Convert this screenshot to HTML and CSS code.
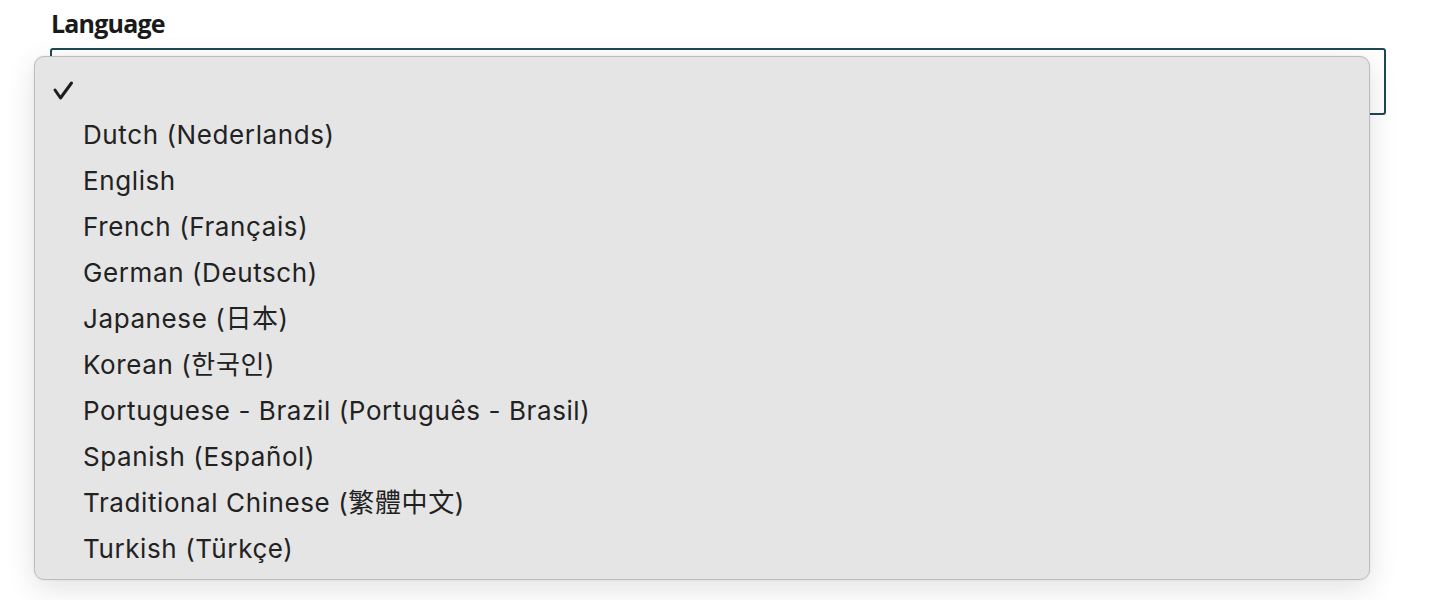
FILE: index.html
```html
<!DOCTYPE html>
<html lang="en">
<head>
    <meta charset="UTF-8">
    <title>Language</title>
    <link rel="stylesheet" href="styles.css">
</head>
<body>

<div class="field">
    <label class="field-label">Language</label>
    <div class="select-box"></div>

    <!-- open dropdown menu -->
    <ul class="menu">
        <li class="menu-item selected">
            <svg class="check" width="22" height="22" viewBox="0 0 22 22"><polyline points="3,10 8.5,18 19.5,3" fill="none" stroke="#1d1d1d" stroke-width="3" stroke-linecap="round" stroke-linejoin="round"/></svg>
        </li>
        <li class="menu-item">Dutch (Nederlands)</li>
        <li class="menu-item">English</li>
        <li class="menu-item">French (Français)</li>
        <li class="menu-item">German (Deutsch)</li>
        <li class="menu-item">Japanese (日本)</li>
        <li class="menu-item">Korean (한국인)</li>
        <li class="menu-item">Portuguese - Brazil (Português - Brasil)</li>
        <li class="menu-item">Spanish (Español)</li>
        <li class="menu-item">Traditional Chinese (繁體中文)</li>
        <li class="menu-item">Turkish (Türkçe)</li>
    </ul>
</div>

</body>
</html>
```

FILE: styles.css
```css
html, body {
    margin: 0;
    padding: 0;
    background-color: white;
    font-family: "Open Sans", "Noto Sans", sans-serif;
}
.field {
    position: relative;
    min-height: 600px;
    box-sizing: border-box;
    padding: 8px 48px 0 50px;
}
.field-label {
    display: block;
    font-size: 25px;
    font-weight: 700;
    letter-spacing: -0.8px;
    color: #1a1a1a;
    line-height: 30px;
    margin-left: 1px;
    margin-bottom: 10px;
}
.select-box {
    height: 63px;
    border: 2px solid #1f4852;
    border-radius: 3px;
    background-color: white;
}
.menu {
    position: absolute;
    top: 56px;
    left: 34px;
    width: 1334px;
    margin: 0;
    padding: 9px 0 7px 0;
    list-style: none;
    background-color: #e5e5e5;
    border: 1px solid #bdbdbd;
    border-radius: 10px;
    box-shadow: 0 8px 30px rgba(0, 0, 0, 0.12), 0 0 2px rgba(0, 0, 0, 0.1);
}
.menu-item {
    height: 46px;
    line-height: 46px;
    padding-left: 48px;
    font-family: Inter, "Noto Sans CJK TC", "Noto Sans CJK KR", sans-serif;
    font-size: 26px;
    letter-spacing: 0.6px;
    color: #222;
}
.menu-item.selected {
    position: relative;
}
.check {
    position: absolute;
    left: 17px;
    top: 14px;
}
```
